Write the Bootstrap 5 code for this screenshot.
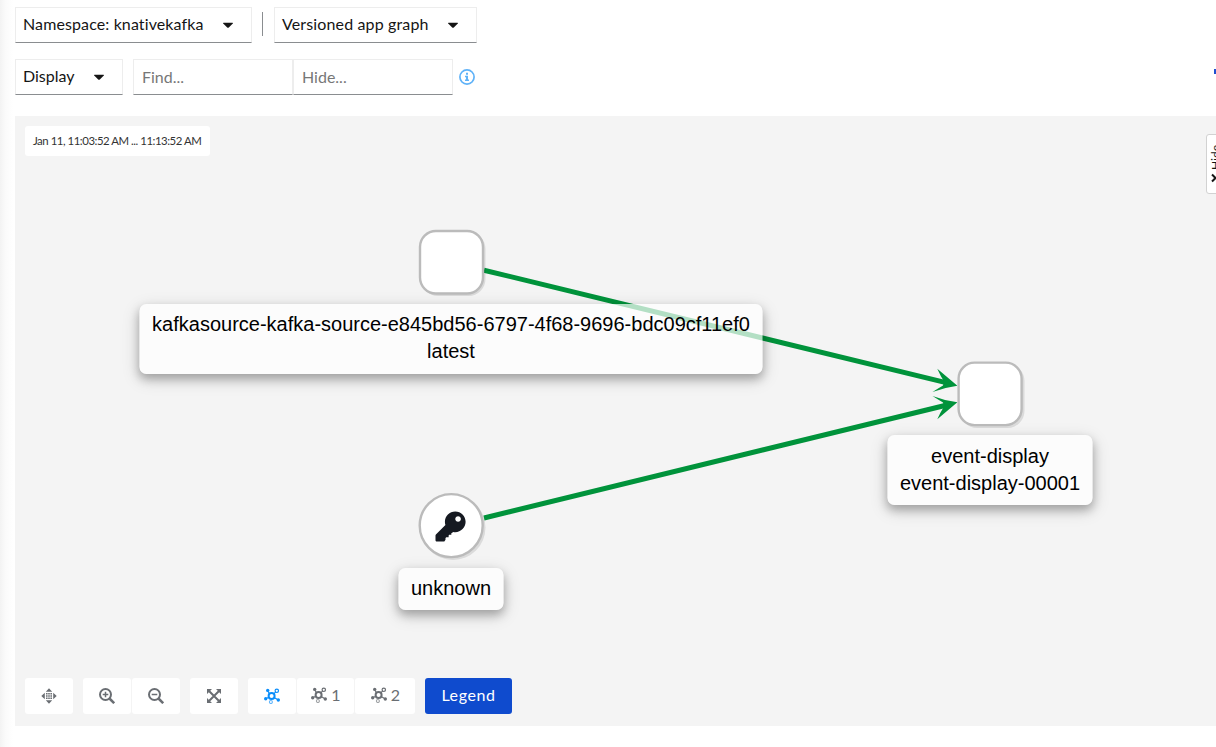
<!DOCTYPE html>
<html lang="en">
<head>
<meta charset="utf-8">
<meta name="viewport" content="width=device-width, initial-scale=1">
<title>Graph</title>
<link rel="stylesheet" href="https://cdn.jsdelivr.net/npm/bootstrap@5.3.0/dist/css/bootstrap.min.css">
<style>
body{font-family:Lato,"Open Sans",sans-serif;font-size:16px;color:#151515;background:#fff;height:747px}
.page-wrap{height:747px;padding:7px 0 21px 15px;background:linear-gradient(90deg,#f3f3f3 0,#fafafa 5px,#fff 13px)}
.pick{height:36px;border:1px solid #ededed;border-bottom-color:#8a8d90;border-radius:0;background:#fff;color:#151515;padding:0 18px 0 7px;font-size:16px;line-height:32px;text-align:left}
.pick span{padding-bottom:2px}
.pick svg{width:10px;height:16px}
.pick-ns{width:237px}.pick-graph{width:203px}.pick-display{width:108px}
.pick-ns span{letter-spacing:.11px}.pick-graph span{letter-spacing:.14px}.pick-display span{letter-spacing:0}
.sep{width:1px;height:24px;background:#8a8d90;margin:0 11px 0 10px;position:relative;top:-1px}
.find-group{margin-left:10px}
.find{width:160px;height:36px;border:1px solid #ededed;border-bottom-color:#8a8d90;border-radius:0;padding:0 8px 1px;font-size:16px}
.find::placeholder{color:#777;opacity:1}
.info-icon{margin-left:6px}
.row-two{margin-top:16px}
.graph{margin-top:21px;height:610px;background:#f4f4f4}
.stamp{top:10px;left:10px;width:185px;height:30px;border-radius:3px;font-size:11.4px;letter-spacing:-.46px;line-height:30px;padding-left:8px;white-space:nowrap;color:#333}
.tag{transform:translateX(-50%);background:rgba(255,255,255,.7);border-radius:7px;font:20px/27px "Liberation Sans",Arial,sans-serif;color:#000;text-align:center;white-space:nowrap;padding:7px 0 9px;box-shadow:0 5px 10px rgba(0,0,0,.25),0 5px 18px rgba(0,0,0,.16)}
.side-tab{left:1191px;top:18px;width:30px;height:60px;border:1px solid #d2d2d2;border-radius:3px;background:#fff}
.side-tab span{writing-mode:vertical-rl;transform:rotate(180deg);font-size:12px;line-height:14px;left:2px;bottom:23px}
.tools{left:10px;bottom:12px;gap:10px}
.tool{width:48px;height:36px;background:#fff;border:0;border-radius:3px;color:#6a6e73;padding:0 0 2px;font-size:16px;line-height:1}
.tool svg{width:16px;height:16px}
.tool-on{color:#0a8dfa}
.tool-one{width:57px;gap:4px;padding-left:1px}
.tool-two{width:60px;gap:4px;padding-left:1px}
.legend-btn{width:87px;height:36px;border-radius:3px;background:#0f4bce;color:#fff;border:0;padding:0 0 2px;font-size:16px;letter-spacing:.6px}
.gap1{gap:1px}
.corner-mark{left:1214px;top:69px;width:2px;height:5px;background:#1f4fd0}
</style>
</head>
<body class="overflow-hidden">
<svg class="d-none">
  <symbol id="caret" viewBox="0 0 10 16"><path d="M.6 5.7h8.8q1 0 .4.8L5.8 10.4q-.8.7-1.6 0L.2 6.5q-.6-.8.4-.8z" fill="#151515"/></symbol>
  <symbol id="topo" viewBox="0 0 16 16"><g stroke="currentColor" fill="none"><circle cx="7.6" cy="8" r="3" stroke-width="2"/><circle cx="12.8" cy="2.8" r="1.7" stroke-width="1.2"/><path d="M9.800 5.800l1.900-1.900M5.600 5.800L4.100 3.500M4.900 9.300L2.200 10.500M10.100 9.600l3.400 2" stroke-width="1.200"/><circle cx="6.900" cy="14" r="1.500" stroke-width="1.100" opacity=".65"/></g><g fill="currentColor"><circle cx="3.700" cy="2.400" r="1.700"/><circle cx="1.700" cy="10.800" r="1.700"/><circle cx="14.300" cy="12" r="1.700"/></g></symbol>
</svg>
<div class="page-wrap position-relative">
  <div class="d-flex align-items-center">
    <button class="pick pick-ns d-flex align-items-center justify-content-between"><span>Namespace: knativekafka</span><svg><use href="#caret"/></svg></button>
    <div class="sep"></div>
    <button class="pick pick-graph d-flex align-items-center justify-content-between"><span>Versioned app graph</span><svg><use href="#caret"/></svg></button>
  </div>
  <div class="row-two d-flex align-items-center">
    <button class="pick pick-display d-flex align-items-center justify-content-between"><span>Display</span><svg><use href="#caret"/></svg></button>
    <div class="find-group d-flex">
      <input class="find" placeholder="Find..."><input class="find" placeholder="Hide...">
    </div>
    <svg class="info-icon" width="16" height="16" viewBox="0 0 16 16"><circle cx="8" cy="8" r="7.100" fill="none" stroke="#5fb2f8" stroke-width="1.700"/><path d="M7 3.700h2v2H7zM6 6.800h3v3.800h1V12H6v-1.400h1V8.200H6z" fill="#5fb2f8"/></svg>
  </div>
  <div class="corner-mark position-absolute"></div>
  <div class="graph position-relative">
    <svg class="position-absolute top-0 start-0" width="1201" height="610" viewBox="15 116 1201 610">
      <g stroke="#00933b" stroke-width="5"><path d="M484 270.200L946 382.600M484 518L946 405.200"/></g>
      <g fill="#00933b"><path d="M957.400 385.700L937.300 368.800Q940.500 376 944 381.600L943 385.500Q938 388.500 932.500 392Q944 387.500 957.400 385.700z"/><path d="M957.400 402.300L937.300 419.200Q940.500 412 944 406.400L943 402.500Q938 399.500 932.500 396Q944 400.500 957.400 402.300z"/></g>
      <g fill="#000" opacity=".1"><rect x="421" y="232" width="64.500" height="64" rx="17"/><rect x="960" y="364" width="64.500" height="64" rx="17"/><circle cx="453" cy="527.500" r="32.500"/></g>
      <g fill="#fff" stroke="#bbb" stroke-width="2.400"><rect x="420" y="231" width="63" height="62.500" rx="16"/><rect x="958.600" y="362.600" width="63" height="62.500" rx="16"/><circle cx="451.200" cy="525.600" r="31.500"/></g>
      <path transform="translate(435.500 511.500) scale(.0588)" fill="#151921" d="M512 176C512 273.200 433.200 352 336 352c-11.200 0-22.200-1-32.800-3l-34 19v28h-36l-10 14v26h-40l-13 14v30l-20 32H24c-13.300 0-24-10.700-24-24v-78c0-6.400 2.500-12.500 7-17l161.800-161.800C163.100 213.800 160 195.300 160 176 160 78.800 238.800 0 336 0 433.500 0 512 78.500 512 176zM336 128c0 26.500 21.500 48 48 48s48-21.500 48-48-21.500-48-48-48-48 21.500-48 48z"/>
    </svg>
    <div class="stamp position-absolute bg-white">Jan 11, 11:03:52 AM ... 11:13:52 AM</div>
    <div class="tag position-absolute" style="left:436px;top:187.500px;width:623px">kafkasource-kafka-source-e845bd56-6797-4f68-9696-bdc09cf11ef0<br>latest</div>
    <div class="tag position-absolute" style="left:975px;top:319px;width:205px;padding:8px 0">event-display<br>event-display-00001</div>
    <div class="tag position-absolute" style="left:436px;top:451.500px;width:105px;padding-bottom:8px">unknown</div>
    <div class="side-tab position-absolute"><span class="position-absolute">Hide</span><svg class="position-absolute" style="left:3px;top:38px" width="8" height="10"><path d="M2 1.500L5.500 5 2 8.500" stroke="#151515" stroke-width="2" fill="none"/></svg></div>
    <div class="tools position-absolute d-flex">
      <button class="tool"><svg viewBox="0 0 16 16"><path fill="currentColor" d="M8 .3l3.200 3.500H4.800zM8 15.700l-3.200-3.500h6.400zM.3 8l3.500-3.200v6.400zM15.700 8l-3.500 3.200V4.800zM5 5h1.600v1.600H5zM7.200 5h1.600v1.600H7.200zM9.400 5H11v1.600H9.400zM5 7.200h1.600v1.600H5zM7.200 7.200h1.600v1.600H7.200zM9.400 7.200H11v1.600H9.400zM5 9.400h1.600V11H5zM7.200 9.400h1.600V11H7.200zM9.400 9.400H11V11H9.400z"/></svg></button>
      <div class="d-flex gap1">
        <button class="tool"><svg viewBox="0 0 16 16" fill="none" stroke="currentColor"><circle cx="6.500" cy="6.500" r="5.500" stroke-width="2"/><path d="M10.500 10.500l4.700 4.700" stroke-width="2.500"/><path d="M6.500 3.700v5.600M3.700 6.500h5.600" stroke-width="1.500"/></svg></button>
        <button class="tool"><svg viewBox="0 0 16 16" fill="none" stroke="currentColor"><circle cx="6.500" cy="6.500" r="5.500" stroke-width="2"/><path d="M10.500 10.500l4.700 4.700" stroke-width="2.500"/><path d="M3.700 6.500h5.600" stroke-width="1.500"/></svg></button>
      </div>
      <button class="tool"><svg viewBox="0 0 16 16"><path d="M3 3l10 10M13 3L3 13" stroke="currentColor" stroke-width="2"/><path d="M1 1h5L1 6zM15 1v5l-5-5zM1 15v-5l5 5zM15 15h-5l5-5z" fill="currentColor"/></svg></button>
      <div class="d-flex gap1">
        <button class="tool tool-on"><svg><use href="#topo"/></svg></button>
        <button class="tool tool-one d-flex align-items-center justify-content-center"><svg><use href="#topo"/></svg>1</button>
        <button class="tool tool-two d-flex align-items-center justify-content-center"><svg><use href="#topo"/></svg>2</button>
      </div>
      <button class="legend-btn">Legend</button>
    </div>
  </div>
</div>
<script src="https://cdn.jsdelivr.net/npm/bootstrap@5.3.0/dist/js/bootstrap.bundle.min.js"></script>
</body>
</html>
